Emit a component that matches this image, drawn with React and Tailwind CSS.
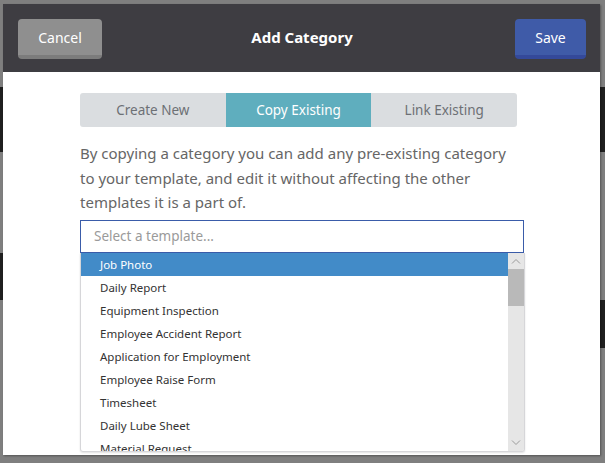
import React from 'react';

const templates = [
  'Job Photo',
  'Daily Report',
  'Equipment Inspection',
  'Employee Accident Report',
  'Application for Employment',
  'Employee Raise Form',
  'Timesheet',
  'Daily Lube Sheet',
  'Material Request',
];

function Chevron({ up }) {
  return (
    <svg width="10" height="6" viewBox="0 0 10 6" className="text-[#9a9a9a]">
      <path d={up ? 'M1 5.5 L5 1.5 L9 5.5' : 'M1 0.5 L5 4.5 L9 0.5'} fill="none" stroke="currentColor" strokeWidth="1" />
    </svg>
  );
}

export default function App() {
  const tabs = ['Create New', 'Copy Existing', 'Link Existing'];
  const active = 1;

  return (
    <div className="relative w-[605px] h-[463px] overflow-hidden bg-[#7f7f7f] font-['Noto_Sans',sans-serif]">
      {/* dimmed page behind the modal */}
      <div className="flex justify-between h-full">
        <div className="w-[3px] flex flex-col">
          <div className="h-[87px]" />
          <div className="h-[65px] bg-[#1f1f1f]" />
          <div className="h-[101px]" />
          <div className="h-[47px] bg-[#1f1f1f]" />
        </div>
        <div className="w-[5px] flex flex-col">
          <div className="h-[87px]" />
          <div className="h-[65px] bg-[#1f1f1f]" />
          <div className="h-[148px]" />
          <div className="h-[48px] bg-[#1f1f1f]" />
        </div>
      </div>

      {/* modal */}
      <div className="absolute top-[4px] left-[3px] w-[597px] h-[451px] bg-white flex flex-col shadow-[1px_1px_2px_rgba(0,0,0,0.35)]">
        {/* header */}
        <div className="h-[68px] bg-[#3e3d42] grid grid-cols-[1fr_auto_1fr] items-start pt-[15px] pl-[15px] pr-[14px]">
          <button className="justify-self-start w-[84px] h-[40px] rounded-[4px] bg-[#8f8f8f] border-b-[4px] border-[#7c7c7c] text-white text-[14px]">
            Cancel
          </button>
          <h1 className="text-white font-bold text-[15px] leading-[36px]">Add Category</h1>
          <button className="justify-self-end w-[71px] h-[40px] rounded-[4px] bg-[#3f5ba8] border-b-[4px] border-[#34499a] text-white text-[14px]">
            Save
          </button>
        </div>

        {/* body */}
        <div className="pl-[77px] pr-[76px] pt-[21px]">
          <div className="flex w-[437px] h-[34px] rounded-[3px] overflow-hidden">
            {tabs.map((t, i) => (
              <div
                key={t}
                className={
                  'flex-1 flex items-center justify-center text-[13.5px] ' +
                  (i === active ? 'bg-[#5faebe] text-white' : 'bg-[#dadde0] text-[#6d7075]')
                }
              >
                {t}
              </div>
            ))}
          </div>

          <p className="mt-[14px] text-[15px] leading-[24.5px] text-[#666666] w-[437px]">
            By copying a category you can add any pre-existing category to your template, and edit it without affecting the other templates it is a part of.
          </p>

          <div className="mt-[5.5px] w-[444px] h-[33px] border border-[#3a5ca9] flex items-center pl-[13px] text-[13.5px] text-[#9a9a9a]">
            Select a template...
          </div>

          <div className="w-[445px] h-[199px] flex border border-t-0 border-[#d6d6d9] rounded-b-[3px] shadow-[0_1px_2px_rgba(0,0,0,0.12)] overflow-hidden">
            <ul className="flex-1">
              {templates.map((t, i) => (
                <li
                  key={t}
                  className={
                    'h-[23px] flex items-center pl-[19px] text-[11.5px] ' +
                    (i === 0 ? 'bg-[#428bc8] text-white' : 'text-[#333333]')
                  }
                >
                  {t}
                </li>
              ))}
            </ul>
            <div className="w-[16px] bg-[#e6e6e6] flex flex-col items-center">
              <div className="h-[16px] flex items-center justify-center">
                <Chevron up />
              </div>
              <div className="w-[16px] h-[37px] bg-[#b9b9b9]" />
              <div className="flex-1" />
              <div className="h-[16px] flex items-center justify-center">
                <Chevron />
              </div>
            </div>
          </div>
        </div>
      </div>
    </div>
  );
}
